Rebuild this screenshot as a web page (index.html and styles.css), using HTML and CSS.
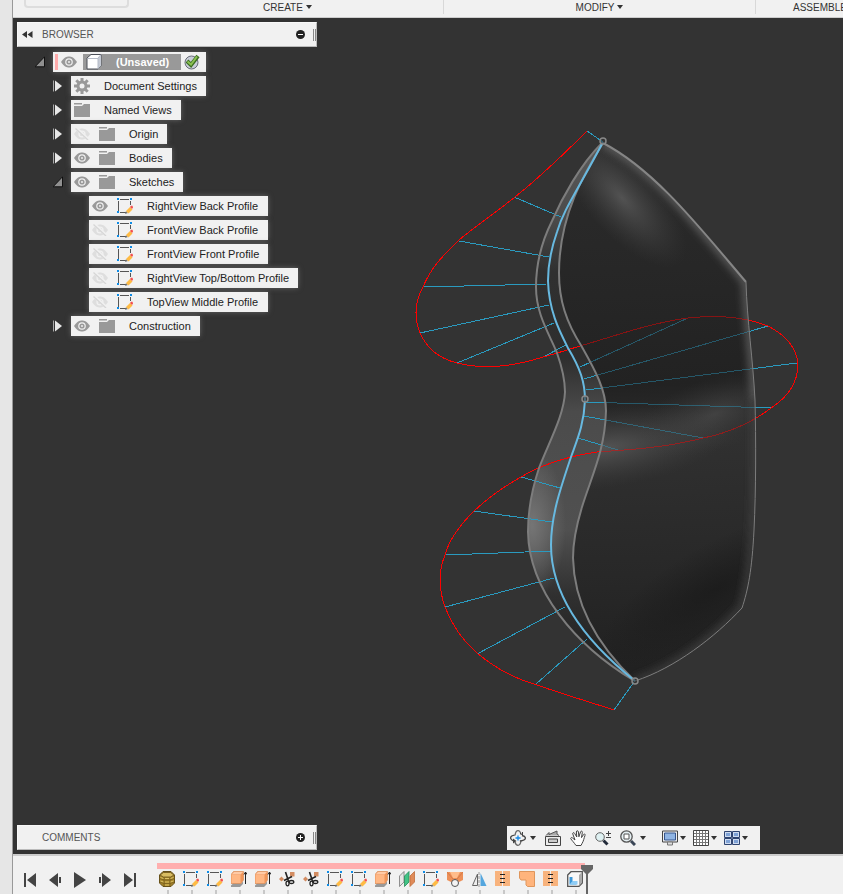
FILE: index.html
```
<!DOCTYPE html>
<html lang="en">
<head>
<meta charset="utf-8">
<title>(Unsaved)</title>
<link rel="stylesheet" href="styles.css">
</head>
<body>
<svg class="defs" aria-hidden="true">
  <symbol id="eye" viewBox="0 0 16 12"><path d="M0 6C3 1.500 5.500.5 8 .5s5 1 8 5.500c-3 4.500-5.500 5.500-8 5.500S3 10.500 0 6z" fill="#999"/><circle cx="8" cy="6" r="3.800" fill="#f1f1f1"/><circle cx="8" cy="6" r="2.600" fill="#999"/><circle cx="8" cy="6" r="1" fill="#eee"/></symbol>
  <symbol id="eye-off" viewBox="0 0 16 12"><path d="M0 6C3 1.500 5.500.5 8 .5s5 1 8 5.500c-3 4.500-5.500 5.500-8 5.500S3 10.500 0 6z" fill="#dedede"/><circle cx="8" cy="6" r="3.600" fill="#f1f1f1"/><circle cx="8" cy="6" r="2.300" fill="#dedede"/><path d="M2 0l13 12" stroke="#f1f1f1" stroke-width="3"/><path d="M1.500.5L14 12" stroke="#d6d6d6" stroke-width="1.300"/></symbol>
  <symbol id="folder" viewBox="0 0 16 14"><path d="M0 0h8v1.500H0zM0 3h8l2-2h6v13H0z" fill="#999"/></symbol>
  <symbol id="gear" viewBox="0 0 16 16"><g stroke="#999" stroke-width="3"><path d="M8 0v16M0 8h16M2.300 2.300l11.400 11.400M13.700 2.300L2.300 13.700"/></g><circle cx="8" cy="8" r="5.500" fill="#999"/><circle cx="8" cy="8" r="2.500" fill="#f1f1f1"/></symbol>
  <symbol id="sketch" viewBox="0 0 16 16"><path d="M3 1.500h9M1.500 3v10M3 14.500h6M13.500 3v4" stroke="#555" fill="none"/><path d="M0 0h2v2H0zM13 0h2v2h-2zM0 13h2v2H0z" fill="#0f8ce6"/><path d="M8 16l1-3 2 2z" fill="#777"/><path d="M9 13l4-4 2.500 2.500-4 4z" fill="#fb4"/><path d="M13 9l1-1.300h1.500L16 9.500l-1 1.500z" fill="#f35050"/></symbol>
  <symbol id="cube" viewBox="0 0 16 16"><path d="M1 4l4-3.500h10v11L12 15H1z" fill="#fff" stroke="#4c5058"/><path d="M12 4l3-3v10.500L12 15z" fill="#c5cad4"/><path d="M1.500 4.500H12V14.500" fill="none" stroke="#b4bac6"/><path d="M12 4l3-3.500" stroke="#b4bac6"/></symbol>
  <symbol id="extrude" viewBox="0 0 16 16"><path d="M0 14.500l2-2h8l2-2v2.500l-3 3H0z" fill="#999"/><path d="M0 3.500L2.500.5h10V9L10 12.500H0z" fill="#f09558" stroke="#d9864f" stroke-width=".6"/><path d="M.5 4H9.500v8H.5z" fill="#ffb784"/><path d="M.5 3.500L3 1h9L9.500 3.500z" fill="#ffcaa5"/><path d="M14.500 13V1M13 3.500L14.500 1 16 3.500" stroke="#222" fill="none"/></symbol>
  <symbol id="coil" viewBox="0 0 16 16"><path d="M.5 4L4 .5h8L15.500 4v8L12 15.500H4L.5 12z" fill="#a5842a" stroke="#66501a"/><path d="M1 4l3.500-2.500h7L15 4l-3.500 2h-7z" fill="#d9bd62" stroke="#6b531a" stroke-width=".8"/><path d="M.5 7.500L5 9h6l4.500-1.500M.5 11L5 12.500h6l4.500-1.500M5 6v9M11 6v9" stroke="#7a611f" stroke-width=".8" fill="none"/><path d="M1.500 6.500l3 1M6 7.500h4M11.500 7.500l3-1M1.500 10l3 1M6 11h4M11.500 11l3-1M6 14h4" stroke="#dcc266"/></symbol>
  <symbol id="scissors" viewBox="0 0 16 16"><path d="M0 8l2.500-2.500L5 8l-2.500 2.500zM11 1h4.500v4.500H11z" fill="#d38c61"/><path d="M6.500 1l3 9M13 5.500L5 9.500" stroke="#222" stroke-width="1.600"/><ellipse cx="8.500" cy="12.500" rx="1.500" ry="2.300" fill="none" stroke="#222" stroke-width="1.300"/><ellipse cx="12.500" cy="11" rx="2.300" ry="1.500" fill="none" stroke="#222" stroke-width="1.300"/></symbol>
  <symbol id="planes" viewBox="0 0 16 16"><path d="M.5 5L5 .5V11L.5 15.500z" fill="#e6e6e6" stroke="#777" stroke-width=".8"/><path d="M5.500 5L10 .5V11l-4.500 4.500z" fill="#42c486" stroke="#268958" stroke-width=".8"/><path d="M11 5l4.500-4.500V11L11 15.500z" fill="#e08b59" stroke="#bf6d3b" stroke-width=".8"/></symbol>
  <symbol id="loft" viewBox="0 0 16 16"><path d="M0 1h16v8l-4 2H4L0 9z" fill="#ed9058"/><path d="M3 1h10l-3 6H6z" fill="#ffbd8b"/><path d="M0 1l6 7M16 1l-6 7" stroke="#ca7340" stroke-width=".7"/><circle cx="8" cy="12" r="3.500" fill="#f4f4f4" stroke="#555"/></symbol>
  <symbol id="mirror" viewBox="0 0 16 16"><path d="M6.500 3v11.500h-5z" fill="#eee" stroke="#666"/><path d="M9.500 2L15.500 15h-6z" fill="#54a6de"/><path d="M8 1v15" stroke="#999" stroke-dasharray="3 1"/></symbol>
  <symbol id="stitch" viewBox="0 0 16 16"><path d="M0 0h7v15H0zM8 0h7v15H8z" fill="#f8b37d"/><path d="M5 3.500h5M5 7.500h5M5 11.500h5" stroke="#222"/></symbol>
  <symbol id="patch" viewBox="0 0 16 16"><path d="M.5.500h15v15H8.500L7 14V9H2L.5 7z" fill="#ffb47c" stroke="#df965c"/></symbol>
  <symbol id="shell" viewBox="0 0 16 16"><path d="M.7 4L4 .7h11.300V12L12 15.300H.7z" fill="#f8f8f8" stroke="#555" stroke-width="1.300"/><path d="M12 4l3-3v10.500l-3 3.500z" fill="#aaa"/><path d="M2.500 6h3v4h4v3.500h-7z" fill="#3c97d8"/><path d="M2.500 13.500l3-3.500h5v3.500z" fill="#8fcdf6"/></symbol>
  <symbol id="closed" viewBox="0 0 10 12"><path d="M.5.500v11" stroke="#aaa"/><path d="M2 .5v11L9 6z" fill="#e8e8e8"/></symbol>
  <symbol id="open" viewBox="0 0 10 12"><path d="M9.500.8v10H0z" fill="#909090" stroke="#111"/></symbol>
</svg>

<aside class="rail"></aside>
<header class="toolbar">
  <div class="workspace"><button class="workspace-button" aria-label="Workspace"></button></div>
  <button class="menu">CREATE<i class="caret"></i></button>
  <button class="menu">MODIFY<i class="caret"></i></button>
  <button class="menu menu-last">ASSEMBLE<i class="caret"></i></button>
</header>

<main class="canvas">
  <svg class="model" width="830" height="836" viewBox="13 18 830 836" role="img" aria-label="Bottle half with curvature comb">
    <defs>
      <path id="body" d="M603 143C585 172 559 215 559 273C559 300 566 322 582 347C595 370 606 390 606 411C605 450 592 475 582 507C575 530 573 545 573 558C574 605 597 645 635 681C675 668 715 637 742 608C748 590 752 570 754 530C756 490 756 440 755 400C753 360 747 320 746 282C700 228 655 170 603 143z"/>
      <clipPath id="body-clip"><use href="#body"/></clipPath>
      <path id="strip" d="M603 143C580 165 562 198 552 221C540 245 536 268 536 287C536 315 550 335 557 353C563 370 565 380 565 392C564 415 550 440 539 468C531 492 528 512 528 532C529 590 575 645 635 681C597 645 574 605 573 558C573 545 575 530 582 507C592 475 605 450 606 411C606 390 595 370 582 347C566 322 559 300 559 273C559 215 585 172 603 143z"/>
      <clipPath id="strip-clip"><use href="#strip"/></clipPath>
      <linearGradient id="strip-fill" gradientUnits="userSpaceOnUse" x1="0" y1="143" x2="0" y2="681">
        <stop offset="0" stop-color="#5a5a5a"/><stop offset=".14" stop-color="#4b4b4b"/><stop offset=".24" stop-color="#303030"/><stop offset=".4" stop-color="#2e2e2e"/><stop offset=".5" stop-color="#4b4b4b"/><stop offset=".6" stop-color="#4e4e4e"/><stop offset=".72" stop-color="#505050"/><stop offset=".84" stop-color="#303030"/><stop offset=".94" stop-color="#242424"/><stop offset="1" stop-color="#444"/>
      </linearGradient>
      <linearGradient id="body-fill" gradientUnits="userSpaceOnUse" x1="640" y1="143" x2="660" y2="681">
        <stop offset="0" stop-color="#2c2c2c"/><stop offset=".28" stop-color="#262626"/><stop offset=".45" stop-color="#222"/><stop offset=".56" stop-color="#303030"/><stop offset=".68" stop-color="#2c2c2c"/><stop offset=".8" stop-color="#282828"/><stop offset="1" stop-color="#202020"/>
      </linearGradient>
      <radialGradient id="glow"><stop offset="0" stop-color="#606060" stop-opacity=".75"/><stop offset=".5" stop-color="#505050" stop-opacity=".4"/><stop offset="1" stop-color="#404040" stop-opacity="0"/></radialGradient>
      <radialGradient id="shade"><stop offset="0" stop-color="#1a1a1a"/><stop offset="1" stop-color="#1a1a1a" stop-opacity="0"/></radialGradient>
      <radialGradient id="shine"><stop offset="0" stop-color="#757575"/><stop offset="1" stop-color="#757575" stop-opacity="0"/></radialGradient>
      <filter id="edge" x="-10%" y="-10%" width="120%" height="120%"><feGaussianBlur stdDeviation="4"/></filter>
      <g id="comb" fill="none" shape-rendering="crispEdges">
        <path class="tooth" d="M587 131L603 142M514 197L561 217M459 241L549 257M423 287L547 284M420 333L549 305M457 363L554 323M543 357L566 345M688 318L580 367M768 326L584 379M797 363L586 390M771 408L586 402M703 438L584 416M618 450L578 438M521 477L560 488M474 511L552 522M446 555L551 551M445 607L554 578M477 654L565 607M536 684L587 639M614 710L634 682"/>
        <path class="envelope" d="M587 131C562 156 540 177 515 197C495 213 477 225 459 240C440 258 430 270 423 287C414 303 415 320 420 333C428 351 441 359 457 363C485 370 515 366 543 357C555 354 567 350 580 346C615 336 650 323 688 318C715 315 745 317 768 326C789 337 797 350 798 364C798 382 788 397 771 408C756 420 730 433 703 438C665 448 625 450 597 452C570 456 541 465 521 477C503 487 488 498 474 511C458 527 449 540 445 555C438 572 439 590 445 607C452 625 463 641 477 653C495 668 515 679 537 685C562 694 590 702 614 710"/>
      </g>
    </defs>
    <g clip-path="url(#strip-clip)">
      <use href="#strip" fill="url(#strip-fill)"/>
      <ellipse cx="532" cy="525" rx="34" ry="75" fill="url(#shine)"/>
    </g>
    <use href="#comb"/>
    <g clip-path="url(#body-clip)">
      <use href="#body" fill="url(#body-fill)"/>
      <ellipse cx="622" cy="198" rx="36" ry="88" transform="rotate(-42 622 198)" fill="url(#glow)"/>
      <ellipse cx="605" cy="448" rx="125" ry="40" transform="rotate(-8 605 448)" fill="url(#glow)"/>
      <ellipse cx="715" cy="414" rx="85" ry="36" transform="rotate(-18 715 414)" fill="url(#glow)" opacity=".6"/>
      <ellipse cx="715" cy="590" rx="130" ry="45" transform="rotate(-30 715 590)" fill="url(#shade)" opacity=".8"/>
      <path d="M603 143C655 170 700 228 746 282C747 320 753 360 755 400" fill="none" stroke="#777" stroke-width="5" filter="url(#edge)"/>
      <path d="M755 400C756 490 756 550 742 608C715 637 675 668 635 681" fill="none" stroke="#484848" stroke-width="5" filter="url(#edge)"/>
      <use href="#comb" opacity=".45"/>
    </g>
    <g fill="none" stroke="#7d7d7d" stroke-width="2">
      <path d="M602 143C580 165 562 198 552 221C540 245 536 268 536 287C536 315 550 335 557 353C563 370 565 380 565 392C564 415 550 440 539 468C531 492 528 512 528 532C529 590 575 645 633 680"/>
      <path d="M603 143C585 172 559 215 559 273C559 300 566 322 582 347C595 370 606 390 606 411C605 450 592 475 582 507C575 530 573 545 573 558C574 605 597 645 635 681"/>
      <path d="M603 143C655 170 700 228 746 282" stroke="#858585"/>
      <path d="M746 282C747 320 753 360 755 400C756 440 756 490 754 530C752 570 748 590 742 608C715 637 675 668 635 681" stroke-width="1"/>
    </g>
    <path d="M603 142C578 190 564 208 557 232C550 252 548 265 548 281C549 312 560 332 568 348C580 368 585 382 585 400C584 425 577 440 571 457C561 487 551 515 551 545C551 600 590 645 635 681" fill="none" stroke="#68b9e0" stroke-width="2"/>
    <g fill="#333" fill-opacity=".6" stroke="#888" stroke-width="1.500"><circle cx="603" cy="141" r="3"/><circle cx="585" cy="399" r="3"/><circle cx="635" cy="681" r="3"/></g>
  </svg>

  <section class="dock">
    <div class="panel">
      <button class="panel-icon" aria-label="Collapse"><svg width="11" height="7" viewBox="0 0 11 7"><path d="M5 0v7L0 3.500zM10.500 0v7l-5-3.500z" fill="#333"/></svg></button>
      <h2>BROWSER</h2>
      <button class="round" aria-label="Minimise"><svg width="9" height="9" viewBox="0 0 9 9"><circle cx="4.500" cy="4.500" r="4.500" fill="#222"/><path d="M2 4.500h5" stroke="#fff"/></svg></button>
      <span class="grip"></span>
    </div>
    <ul class="tree">
      <li>
        <div class="row"><button class="twist" aria-label="Collapse document"><svg><use href="#open"/></svg></button>
          <div class="item root"><i class="activity"></i><svg class="ico"><use href="#eye"/></svg><span class="name"><svg width="16" height="16"><use href="#cube"/></svg><b>(Unsaved)</b></span><svg class="check" viewBox="0 0 16 16"><circle cx="7.500" cy="8.500" r="6.500" fill="#c9cdd8" stroke="#686c78"/><path d="M3 7l4 4 7-9" stroke="#3c6e22" stroke-width="4" fill="none"/><path d="M3.500 7.500l3.500 3 6-8" stroke="#8cc152" stroke-width="2" fill="none"/></svg></div></div>
        <ul>
          <li class="row"><button class="twist" aria-label="Expand"><svg><use href="#closed"/></svg></button><div class="item"><svg class="ico tall"><use href="#gear"/></svg><span>Document Settings</span></div></li>
          <li class="row"><button class="twist" aria-label="Expand"><svg><use href="#closed"/></svg></button><div class="item"><svg class="ico fold"><use href="#folder"/></svg><span>Named Views</span></div></li>
          <li class="row"><button class="twist" aria-label="Expand"><svg><use href="#closed"/></svg></button><div class="item"><svg class="ico"><use href="#eye-off"/></svg><svg class="ico fold"><use href="#folder"/></svg><span>Origin</span></div></li>
          <li class="row"><button class="twist" aria-label="Expand"><svg><use href="#closed"/></svg></button><div class="item"><svg class="ico"><use href="#eye"/></svg><svg class="ico fold"><use href="#folder"/></svg><span>Bodies</span></div></li>
          <li>
            <div class="row"><button class="twist" aria-label="Collapse"><svg><use href="#open"/></svg></button><div class="item"><svg class="ico"><use href="#eye"/></svg><svg class="ico fold"><use href="#folder"/></svg><span>Sketches</span></div></div>
            <ul class="sketches">
              <li class="row"><div class="item"><svg class="ico"><use href="#eye"/></svg><svg class="ico tall"><use href="#sketch"/></svg><span>RightView Back Profile</span></div></li>
              <li class="row"><div class="item"><svg class="ico"><use href="#eye-off"/></svg><svg class="ico tall"><use href="#sketch"/></svg><span>FrontView Back Profile</span></div></li>
              <li class="row"><div class="item"><svg class="ico"><use href="#eye-off"/></svg><svg class="ico tall"><use href="#sketch"/></svg><span>FrontView Front Profile</span></div></li>
              <li class="row"><div class="item"><svg class="ico"><use href="#eye-off"/></svg><svg class="ico tall"><use href="#sketch"/></svg><span>RightView Top/Bottom Profile</span></div></li>
              <li class="row"><div class="item"><svg class="ico"><use href="#eye-off"/></svg><svg class="ico tall"><use href="#sketch"/></svg><span>TopView Middle Profile</span></div></li>
            </ul>
          </li>
          <li class="row"><button class="twist" aria-label="Expand"><svg><use href="#closed"/></svg></button><div class="item"><svg class="ico"><use href="#eye"/></svg><svg class="ico fold"><use href="#folder"/></svg><span>Construction</span></div></li>
        </ul>
      </li>
    </ul>
    <div class="panel comments">
      <span class="panel-icon"></span>
      <h2>COMMENTS</h2>
      <button class="round" aria-label="Expand comments"><svg width="9" height="9" viewBox="0 0 9 9"><circle cx="4.500" cy="4.500" r="4.500" fill="#222"/><path d="M2 4.500h5M4.500 2v5" stroke="#fff"/></svg></button>
      <span class="grip"></span>
    </div>
  </section>

  <nav class="navbar">
    <div class="tools">
      <button class="tool" aria-label="Orbit"><svg viewBox="0 0 16 16"><path d="M5 5.500C5.500 2 6.500.7 8 .7s2.500 1.300 3 4M11 11c-.5 3-1.500 4.300-3 4.300S5.500 14 5 12" fill="none" stroke="#666" stroke-width="1.300"/><path d="M3.500 11C1.500 10 .6 9 .6 8c0-1.500 2-2.500 4-2.800M12 5.500c2 .5 3.400 1.300 3.400 2.500 0 1.700-2.500 2.700-5.500 3" fill="none" stroke="#444" stroke-width="1.300"/><path d="M3 8.500L6.500 11 3 13.500z" fill="#444"/><path d="M8 5.500v5M5.500 8h5" stroke="#1288e8" stroke-width="1.300"/><path d="M10 3l2.500 2V2" stroke="#444" fill="none"/></svg><i class="caret"></i></button>
      <button class="tool" aria-label="Look at"><svg viewBox="0 0 16 16"><path d="M.5 6.500h15v9H.5z" fill="#ececec" stroke="#444"/><path d="M1 5.500l3-3v2l8-3.500v3l2 1.500" fill="#aaa" stroke="#555"/><path d="M3.500 9h9v3.500h-9z" fill="#ccc" stroke="#444"/></svg></button>
      <button class="tool" aria-label="Pan"><svg viewBox="0 0 16 16"><path d="M6 15.500C4 12.500 2 10.500 .8 8.800c-.5-1 .8-1.700 1.600-.9L5 10 2.800 4c-.4-1.500 1.300-2 1.800-.6L6.800 7 6.400 2c0-1.700 1.800-1.700 2 0l.5 4.800L10.500 2c.5-1.500 2.200-1 1.800.5L11.500 7.600l2-3c.8-1.200 2-.4 1.500.8-1 2.600-1.500 6-3 8.100l-1 2z" fill="#fff" stroke="#444"/></svg></button>
      <button class="tool" aria-label="Zoom"><svg viewBox="0 0 16 16"><circle cx="5" cy="7" r="4.300" fill="#dff1f2" stroke="#666"/><path d="M8.500 10.500l4 4" stroke="#222b3a" stroke-width="3"/><path d="M11 3.500h5M13.500 1v5M11 7.500h5" stroke="#444"/></svg></button>
      <button class="tool" aria-label="Fit"><svg viewBox="0 0 16 16"><circle cx="6.500" cy="6.500" r="5.700" fill="#e5eff2" stroke="#555" stroke-width="1.300"/><path d="M4 4h5v5H4z" fill="#fff" stroke="#555"/><path d="M11 11l4 4" stroke="#3b4657" stroke-width="3"/></svg><i class="caret"></i></button>
    </div>
    <div class="tools views">
      <button class="tool" aria-label="Display settings"><svg viewBox="0 0 16 16"><path d="M.5 1h15v11H.5z" fill="#eee" stroke="#444"/><path d="M2.500 3h11v7h-11z" fill="#8fb4e3" stroke="#35558c"/><path d="M5.500 12h5v3h-5z" fill="#ddd" stroke="#777"/></svg><i class="caret"></i></button>
      <button class="tool" aria-label="Grid"><svg viewBox="0 0 16 16"><path d="M.5.500h15v15H.5z" fill="#fff" stroke="#444"/><path d="M3.500 1v14M6.500 1v14M9.500 1v14M12.500 1v14M1 3.500h14M1 6.500h14M1 9.500h14M1 12.500h14" stroke="#777"/></svg><i class="caret"></i></button>
      <button class="tool" aria-label="Viewports"><svg viewBox="0 0 16 16"><path d="M.5 1.500h7v6h-7zM8.500 1.500h7v6h-7zM.5 8.500h7v6h-7zM8.500 8.500h7v6h-7z" fill="#cfdcf0" stroke="#2f4470"/><path d="M2 3h4v3H2zM10 3h4v3h-4zM2 10h4v3H2zM10 10h4v3h-4z" fill="#7fa2d6"/></svg><i class="caret"></i></button>
    </div>
  </nav>
</main>

<footer class="timeline">
  <div class="transport">
    <button aria-label="Go to start"><svg viewBox="0 0 14 16"><path d="M1 1h2v14H1zM13 1v14L4 8z"/></svg></button>
    <button aria-label="Step back"><svg viewBox="0 0 14 16"><path d="M10 1v14L1 8zM11 5h2v6h-2z"/></svg></button>
    <button aria-label="Play"><svg viewBox="0 0 14 16"><path d="M1 0v16l12-8z"/></svg></button>
    <button aria-label="Step forward"><svg viewBox="0 0 14 16"><path d="M4 1v14l9-7zM1 5h2v6H1z"/></svg></button>
    <button aria-label="Go to end"><svg viewBox="0 0 14 16"><path d="M11 1h2v14h-2zM1 1v14l9-7z"/></svg></button>
  </div>
  <div class="track">
    <ol>
      <li><svg><use href="#coil"/></svg></li>
      <li><svg><use href="#sketch"/></svg></li>
      <li><svg><use href="#sketch"/></svg></li>
      <li><svg><use href="#extrude"/></svg></li>
      <li><svg><use href="#extrude"/></svg></li>
      <li><svg><use href="#scissors"/></svg></li>
      <li><svg><use href="#scissors"/></svg></li>
      <li><svg><use href="#sketch"/></svg></li>
      <li><svg><use href="#sketch"/></svg></li>
      <li><svg><use href="#extrude"/></svg></li>
      <li><svg><use href="#planes"/></svg></li>
      <li><svg><use href="#sketch"/></svg></li>
      <li><svg><use href="#loft"/></svg></li>
      <li><svg><use href="#mirror"/></svg></li>
      <li><svg><use href="#stitch"/></svg></li>
      <li><svg><use href="#patch"/></svg></li>
      <li><svg><use href="#stitch"/></svg></li>
      <li><svg><use href="#shell"/></svg></li>
    </ol>
    <svg class="marker" width="12" height="29" viewBox="0 0 12 29"><path d="M0 0h12v4L7 9v20H5V9L0 4z" fill="#666"/></svg>
  </div>
</footer>
</body>
</html>
```
FILE: styles.css
```
* { box-sizing: border-box; }
body {
  margin: 0;
  height: 100vh;
  display: grid;
  grid-template: 18px 1fr 40px / 13px 1fr;
  overflow: hidden;
  background: #f1f1f1;
  color: #333;
  font: 11px/20px "Liberation Sans", Arial, sans-serif;
}
button { border: 0; padding: 0; margin: 0; background: none; color: inherit; font: inherit; }
ul, ol { list-style: none; margin: 0; padding: 0; }
svg { display: block; flex: none; }
.defs { position: absolute; width: 0; height: 0; }
.caret { width: 0; height: 0; border: 3px solid transparent; border-top: 4px solid #333; border-bottom: 0; }

.rail { grid-row: 1 / -1; background: #e6e6e6; border-right: 1px solid #999; }

.toolbar { display: flex; overflow: hidden; border-bottom: 1px solid #ccc; background: #f1f1f1; }
.workspace { flex: none; width: 119px; padding: 0 3px 9px 11px; }
.workspace-button { display: block; width: 100%; height: 8px; border: 2px solid #ddd; border-top: 0; border-radius: 0 0 4px 4px; }
.menu {
  flex: none;
  width: 312px;
  height: 14px;
  display: flex;
  align-items: center;
  justify-content: center;
  gap: 3px;
  padding-top: 2px;
  border-right: 1px solid #d8d8d8;
  font-size: 10px;
}
.menu .caret { margin-bottom: 2px; }
.menu-last { width: 138px; }

.canvas {
  position: relative;
  min-height: 0;
  padding: 4px;
  display: flex;
  align-items: flex-end;
  overflow: hidden;
  background: #333;
}
.model { position: absolute; top: 0; left: 0; }
.tooth { stroke: #2a9abf; }
.envelope { stroke: #f00; }

.dock { position: relative; width: 300px; height: 100%; display: flex; flex-direction: column; }
.panel {
  height: 25px;
  flex: none;
  display: flex;
  align-items: center;
  background: #f1f1f1;
  border: 1px solid #f8f8f8;
  border-right-color: #bbb;
  border-bottom-color: #bbb;
}
.panel h2 { flex: 1; margin: 0; font-size: 10px; font-weight: normal; color: #555; }
.panel-icon { width: 24px; padding-left: 4px; }
.round { margin-right: 8px; }
.grip { width: 3px; height: 12px; border: solid #888; border-width: 0 1px; }
.comments { margin-top: auto; }

.tree { padding: 5px 0 0 18px; }
.tree ul { padding-left: 18px; }
.tree .sketches { padding-left: 36px; }
.row { display: flex; height: 20px; margin-bottom: 4px; }
.twist { width: 18px; display: flex; align-items: center; }
.twist svg { width: 10px; height: 12px; }
.item {
  display: flex;
  align-items: center;
  gap: 3px;
  padding-right: 9px;
  background: #f1f1f1;
  box-shadow: 0 0 5px #666;
  color: #222;
  white-space: nowrap;
}
.item span { padding-left: 8px; }
.sketches .item { min-width: 179px; }
.ico { width: 22px; height: 12px; }
.tall { height: 16px; }
.fold { height: 14px; }
.root { gap: 0; padding: 0 6px 0 2px; }
.activity { width: 3px; height: 16px; background: #ffacac; }
.root .name { display: flex; align-items: center; gap: 14px; height: 16px; margin: 0 3px; padding: 0 12px 0 3px; background: #999; color: #fff; }
.check { width: 16px; height: 16px; }

.navbar {
  position: relative;
  height: 24px;
  margin-left: 190px;
  padding: 0 12px 0 3px;
  display: flex;
  align-items: center;
  gap: 16px;
  background: #f1f1f1;
}
.tools { display: flex; gap: 9px; }
.tool { display: flex; align-items: center; gap: 4px; }
.tool svg { width: 16px; height: 16px; }
.views { gap: 7px; }
.views .tool { gap: 2px; }

.timeline { display: flex; border-top: 2px solid #ccc; background: #f1f1f1; }
.transport { display: flex; gap: 11px; width: 142px; padding: 10px 0 0 10px; align-items: center; }
.transport svg { width: 14px; height: 16px; fill: #444; }
.track { position: relative; padding-top: 7px; }
.track::before { content: ""; display: block; height: 6px; margin: 0 2px; background: #ffafaf; }
.track ol { display: flex; }
.track li { width: 24px; height: 25px; padding: 2px 4px 0; background: linear-gradient(#c8c8c8, #c8c8c8) 12px 21px / 2px 8px no-repeat; }
.track li svg { width: 16px; height: 16px; }
.marker { position: absolute; top: 9px; right: -6px; }
```
